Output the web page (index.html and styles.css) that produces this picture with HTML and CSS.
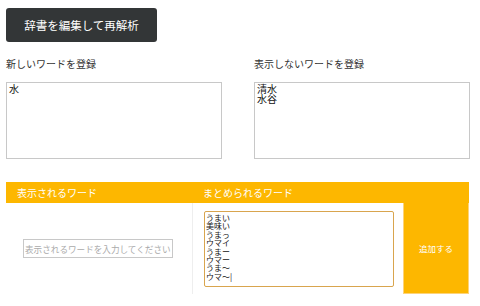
FILE: index.html
```html
<!DOCTYPE html>
<html lang="ja">
<head>
<meta charset="utf-8">
<link rel="stylesheet" href="styles.css">
</head>
<body>
<button class="reparse">辞書を編集して再解析</button>
<div class="cols">
  <div class="col">
    <div class="label">新しいワードを登録</div>
    <textarea class="area">水</textarea>
  </div>
  <div class="col">
    <div class="label">表示しないワードを登録</div>
    <textarea class="area">清水
水谷</textarea>
  </div>
</div>
<div class="table">
  <div class="head">
    <div class="hc c1">表示されるワード</div>
    <div class="hc c2">まとめられるワード</div>
    <div class="hc c3"></div>
  </div>
  <div class="row">
    <div class="bc c1"><input class="word" type="text" placeholder="表示されるワードを入力してください"></div>
    <div class="bc c2 divided"><textarea class="merge">うまい
美味い
うまっ
ウマイ
うまー
ウマー
うま〜
ウマ〜|</textarea></div>
    <div class="bc c3"><div class="add">追加する</div></div>
  </div>
</div>
</body>
</html>
```
FILE: styles.css
```css
html, body { margin: 0; background: #fff; }
body {
  padding: 8px 6px 0 6px;
  font-family: "Noto Sans CJK JP", "Noto Sans", sans-serif;
  color: #333;
}
.reparse {
  display: block;
  width: 151px;
  height: 34px;
  background: #333637;
  color: #fff;
  border: none;
  border-radius: 3px;
  font-family: "Noto Sans CJK JP", sans-serif;
  font-size: 11.5px;
  padding: 0;
}
.cols { display: flex; margin-top: 15px; }
.col { width: 248px; flex-shrink: 0; }
.label { font-size: 10px; line-height: 14px; height: 14px; color: #333; }
.area {
  display: block;
  box-sizing: border-box;
  margin-top: 11px;
  width: 216px;
  height: 77px;
  border: 1px solid #c8c8c8;
  padding: 1px 2px;
  font-family: "Noto Sans CJK JP", sans-serif;
  font-size: 10px;
  line-height: 10px;
  color: #111;
  resize: none;
}
.table { margin-top: 23px; width: 463px; }
.head { display: flex; height: 21px; background: #fdb700; }
.hc { color: #fff; font-size: 10px; line-height: 21px; box-sizing: border-box; padding-left: 11px; }
.c1 { width: 186px; flex-shrink: 0; }
.c2 { width: 211px; flex-shrink: 0; }
.c3 { width: 66px; flex-shrink: 0; }
.row { display: flex; height: 91px; }
.bc { box-sizing: border-box; display: flex; align-items: center; }
.bc.c1 { justify-content: center; padding-right: 2px; }
.divided { border-left: 1px solid #eee; align-items: flex-start; padding: 8px 0 0 11px; }
.word {
  box-sizing: border-box;
  width: 150px;
  height: 19px;
  border: 1px solid #c8c8c8;
  padding: 0 1px;
  font-family: "Noto Sans CJK JP", sans-serif;
  font-size: 8.6px;
}
.word::placeholder { color: #aaa; }
.merge {
  display: block;
  box-sizing: border-box;
  width: 190px;
  height: 76px;
  border: 1px solid #d9a54e;
  border-radius: 2px;
  padding: 2px 1px;
  font-family: "Noto Sans CJK JP", sans-serif;
  font-size: 8px;
  line-height: 8.4px;
  color: #111;
  resize: none;
  outline: none;
}
.bc.c3 { align-items: stretch; }
.add {
  box-sizing: border-box;
  width: 66px;
  background: #fdb700;
  border: 1px solid #fdd37a;
  border-top: none;
  color: #fff;
  font-size: 8.5px;
  display: flex;
  align-items: center;
  justify-content: center;
}
```
